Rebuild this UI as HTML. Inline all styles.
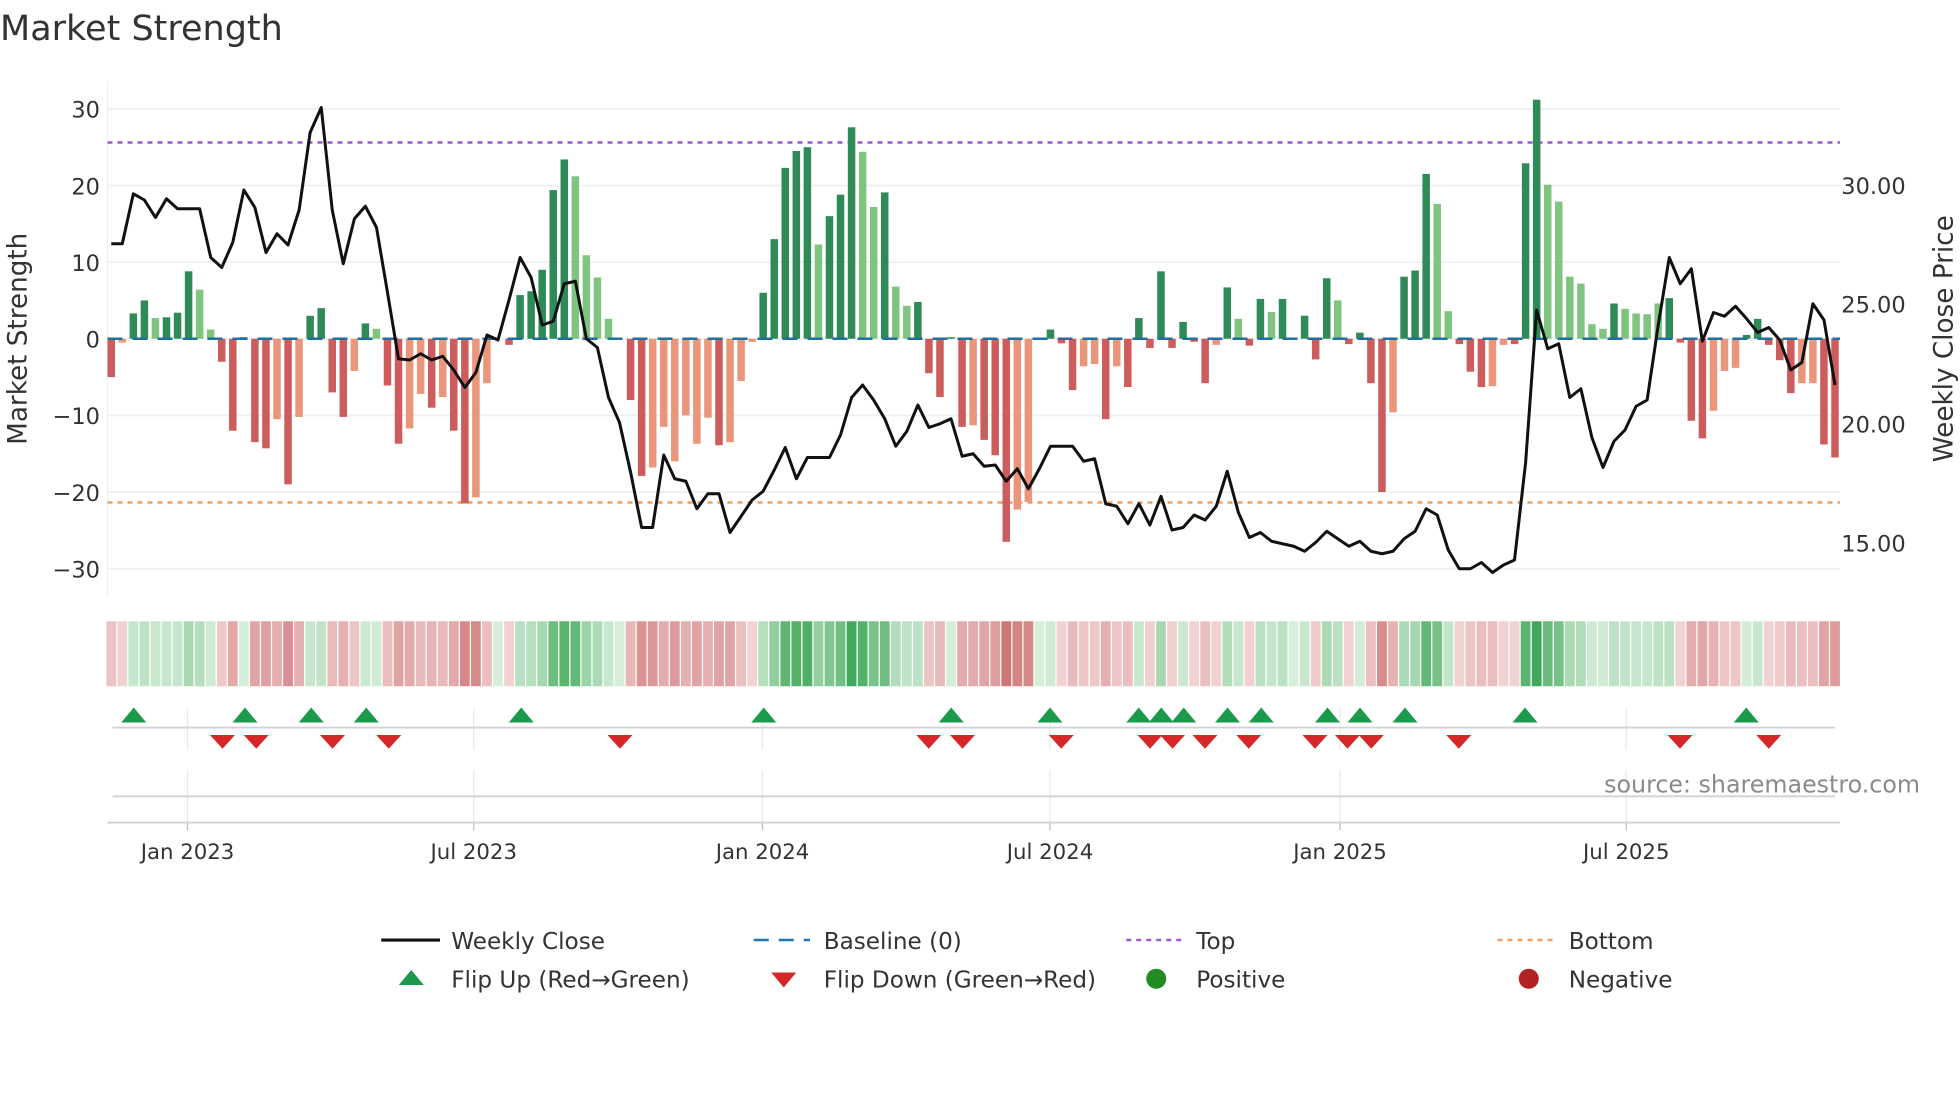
<!DOCTYPE html>
<html><head><meta charset="utf-8"><style>
html,body{margin:0;padding:0;background:#fff;width:1960px;height:1102px;overflow:hidden}
svg text{font-family:"DejaVu Sans","Liberation Sans",sans-serif;fill:#333}
</style></head><body>
<svg id="s" width="1960" height="1102" viewBox="0 0 1568 881.6" xmlns="http://www.w3.org/2000/svg">
<text x="0" y="32" font-size="28" fill="#333">Market Strength</text>
<g id="grid"></g>
<g id="bars"></g>
<g id="heat"></g>
<g id="marks"></g>
<text transform="translate(21,271) rotate(-90)" text-anchor="middle" font-size="21">Market Strength</text>
<text transform="translate(1562,271) rotate(-90)" text-anchor="middle" font-size="21">Weekly Close Price</text>
<text x="1536" y="634" text-anchor="end" font-size="19" style="fill:#8a8a8a">source: sharemaestro.com</text>
<g font-size="18.5">
<line x1="305" y1="752" x2="352" y2="752" stroke="#111" stroke-width="2.5"/>
<text x="361" y="759">Weekly Close</text>
<line x1="603" y1="752" x2="648" y2="752" stroke="#1f77b4" stroke-width="2" stroke-dasharray="12,8"/>
<text x="659" y="759">Baseline (0)</text>
<line x1="901" y1="752" x2="945" y2="752" stroke="#9b59d0" stroke-width="2" stroke-dasharray="4,4"/>
<text x="957" y="759">Top</text>
<line x1="1198" y1="752" x2="1243" y2="752" stroke="#f0a060" stroke-width="2" stroke-dasharray="4,4"/>
<text x="1255" y="759">Bottom</text>
<polygon points="319,788 339,788 329,776" fill="#1a9a4a"/>
<text x="361" y="790">Flip Up (Red→Green)</text>
<polygon points="617,778 637,778 627,790" fill="#d62728"/>
<text x="659" y="790">Flip Down (Green→Red)</text>
<circle cx="925" cy="783" r="8" fill="#228b22"/>
<text x="957" y="790">Positive</text>
<circle cx="1223" cy="783" r="8" fill="#b22222"/>
<text x="1255" y="790">Negative</text>
</g>
</svg>
<script>
const NS="http://www.w3.org/2000/svg";
function el(p,t,a){const e=document.createElementNS(NS,t);for(const k in a)e.setAttribute(k,a[k]);p.appendChild(e);return e;}
const grid=document.getElementById('grid'),bars=document.getElementById('bars'),heat=document.getElementById('heat'),marks=document.getElementById('marks');
const Y=v=>271-v*6.13;
[30,20,10,0,-10,-20,-30].forEach(v=>{el(grid,'line',{x1:86,x2:1472,y1:Y(v),y2:Y(v),stroke:'#eef0f4','stroke-width':1.5});
 const t=el(grid,'text',{x:80,y:Y(v)+7,'text-anchor':'end','font-size':18});t.textContent=(v<0?'−'+(-v):v);});
[[30,148],[25,243],[20,339],[15,434]].forEach(([p,y])=>{const t=el(grid,'text',{x:1473,y:y+7,'font-size':18});t.textContent=p.toFixed(2);});
el(grid,'line',{x1:86,x2:86,y1:65,y2:478,stroke:'#eef0f4','stroke-width':1});
const ticks=[[150,'Jan 2023'],[379,'Jul 2023'],[610,'Jan 2024'],[840,'Jul 2024'],[1072,'Jan 2025'],[1301,'Jul 2025']];
ticks.forEach(([x,l])=>{el(grid,'line',{x1:x,x2:x,y1:566,y2:600,stroke:'#e8eaf0','stroke-width':1});
 el(grid,'line',{x1:x,x2:x,y1:616,y2:658,stroke:'#e8eaf0','stroke-width':1});
 el(grid,'line',{x1:x,x2:x,y1:658,y2:664,stroke:'#bbb','stroke-width':1});
 const t=el(grid,'text',{x:x,y:687,'text-anchor':'middle','font-size':17});t.textContent=l;});
el(grid,'line',{x1:90,x2:1468,y1:582,y2:582,stroke:'#d0d2d8','stroke-width':1.5});
el(grid,'line',{x1:90,x2:1468,y1:637,y2:637,stroke:'#d0d2d8','stroke-width':1.5});
el(grid,'line',{x1:86,x2:1472,y1:658,y2:658,stroke:'#cfd1d6','stroke-width':1.5});
el(grid,'line',{x1:86,x2:1472,y1:114,y2:114,stroke:'#9b59d0','stroke-width':2,'stroke-dasharray':'4,4'});
el(grid,'line',{x1:86,x2:1472,y1:402,y2:402,stroke:'#f0a060','stroke-width':2,'stroke-dasharray':'4,4'});
const D="-5r -0.5s 3.3g 5g 2.7l 2.8g 3.4g 8.8g 6.4l 1.2l -3r -12r 0.2g -13.5r -14.3r -10.5s -19r -10.2s 3g 4g -7r -10.2r -4.2s 2g 1.3l -6.1r -13.7r -11.7s -7.2s -9r -7.6s -12r -21.5r -20.7s -5.8s 0s -0.8r 5.7g 6.2g 9g 19.4g 23.4g 21.2l 10.9l 8l 2.6l 0s -8r -17.9r -16.8s -11.5s -16s -10s -13.7s -10.3s -13.9r -13.5s -5.5s -0.4s 6g 13g 22.3g 24.5g 25g 12.3l 16g 18.8g 27.6g 24.4l 17.2l 19.1g 6.8l 4.3l 4.8g -4.5r -7.6r 0.2g -11.5r -11.3s -13.2r -15.2r -26.5r -22.3s -21.3s 0s 1.2g -0.6r -6.7r -3.6s -3.3s -10.5r -3.6s -6.3r 2.7g -1.2r 8.8g -1.2r 2.2g -0.4r -5.8r -0.8s 6.7g 2.6l -0.9r 5.2g 3.5l 5.2g 0s 3g -2.7r 7.9g 5l -0.7r 0.8g -5.8r -20r -9.6s 8.1g 8.9g 21.5g 17.6l 3.6l -0.7r -4.3r -6.3r -6.2s -0.8s -0.7r 22.9g 31.2g 20.1l 17.9l 8.1l 7.2l 1.9l 1.3l 4.6g 3.9l 3.3l 3.2l 4.6l 5.3g -0.5r -10.7r -13r -9.4s -4.2s -3.8s 0.5g 2.6g -0.8r -2.8r -7.1r -5.8s -5.8s -13.8r -15.5r".split(' ');
const C={g:'#2e8b57',l:'#7fc47f',r:'#cd5c5c',s:'#e9967a'};
const n=D.length, step=(1468-89)/(n-1);
D.forEach((d,i)=>{const v=parseFloat(d),c=d.slice(-1),x=89+i*step;
 const y0=Y(Math.max(v,0)),h=Math.abs(v)*6.13;
 if(h>0.3)el(bars,'rect',{x:x-3,y:y0,width:6,height:h,fill:C[c]});
 const a=Math.min(Math.abs(v)/28,1);
 let col;
 if(v>=0){const r=Math.round(214-a*150),g=Math.round(238-a*70),b=Math.round(218-a*130);col=`rgb(${r},${g},${b})`;}
 else{const r=Math.round(242-a*36),g=Math.round(212-a*100),b=Math.round(212-a*100);col=`rgb(${r},${g},${b})`;}
 el(heat,'rect',{x:x-4.4+0.5,y:497,width:step-1,height:52,fill:col});
});
el(bars,'line',{x1:86,x2:1472,y1:271,y2:271,stroke:'#1f6f9f','stroke-width':2,'stroke-dasharray':'12,8'});
const P=[195,195,155,160,174,159,167,167,167,206,214,194,152,166,202,187,196,168,106,86,168,211,175,165,182,234,287,288,283,288,285,296,310,298,268,272,240,206,222,260,257,227,225,271,278,318,338,378,422,422,364,383,385,407,395,395,426,413,400,393,376,358,383,366,366,366,348,318,308,320,335,357,345,324,342,339,335,365,363,373,372,385,375,391,375,357,357,357,369,367,403,405,419,403,420,397,424,422,412,416,405,377,410,430,426,433,435,437,441,434,425,431,437,433,441,443,441,431,425,407,412,440,455,455,450,458,452,448,370,248,279,275,318,311,350,374,353,344,325,320,260,206,227,215,273,250,253,245,255,266,262,272,296,290,243,256,308];
const ps=(1468-89)/(P.length-1);
el(bars,'polyline',{points:P.map((y,i)=>(89+i*ps).toFixed(1)+','+y).join(' '),fill:'none',stroke:'#111','stroke-width':2.4,'stroke-linejoin':'round'});
[107,196,249,293,417,611,761,840,911,929,947,982,1009,1062,1088,1124,1220,1397].forEach(x=>el(marks,'polygon',{points:`${x-10},578 ${x+10},578 ${x},566`,fill:'#1a9a4a'}));
[178,205,266,311,496,743,770,849,920,938,964,999,1052,1078,1097,1167,1344,1415].forEach(x=>el(marks,'polygon',{points:`${x-10},588 ${x+10},588 ${x},599`,fill:'#d62728'}));
</script>
</body></html>
